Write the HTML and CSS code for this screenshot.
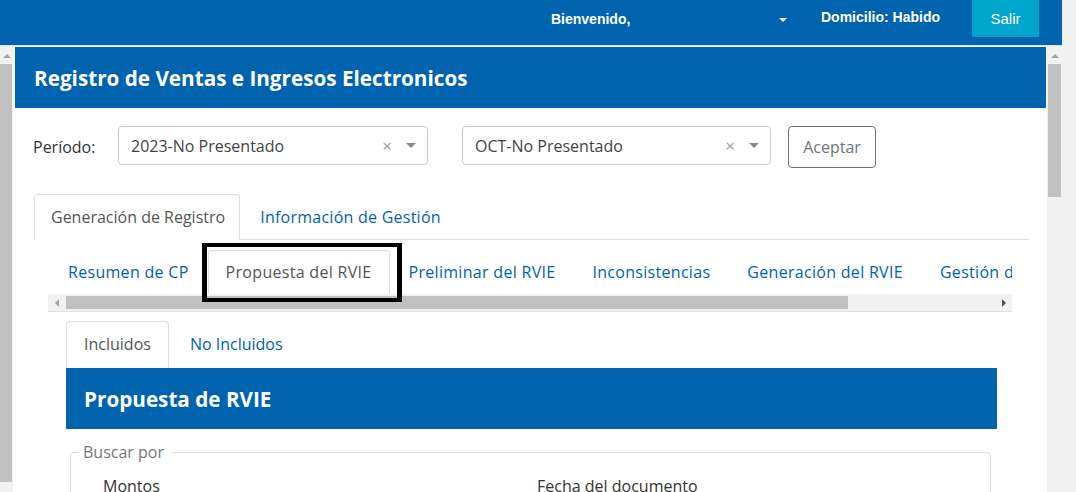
FILE: index.html
```html
<!DOCTYPE html>
<html lang="es">
<head>
<meta charset="utf-8">
<title>Registro de Ventas e Ingresos Electronicos</title>
<link rel="stylesheet" href="styles.css">
</head>
<body>
<div class="screen">
  <div class="main">
    <header class="topbar">
      <div class="user">
        <span>Bienvenido,</span>
        <span class="caret"></span>
      </div>
      <div class="domicilio">Domicilio: Habido</div>
      <button class="salir">Salir</button>
    </header>
    <div class="body-row">
      <div class="vscroll left">
        <span class="arrow-up"></span>
        <span class="thumb"></span>
      </div>
      <div class="panel">
        <div class="panel-head">Registro de Ventas e Ingresos Electronicos</div>
        <div class="panel-body">
          <div class="period">
            <label class="period-label">Período:</label>
            <div class="select s1">
              <span class="select-text">2023-No Presentado</span>
              <span class="select-clear">×</span>
              <span class="select-caret"></span>
            </div>
            <div class="select s2">
              <span class="select-text">OCT-No Presentado</span>
              <span class="select-clear">×</span>
              <span class="select-caret"></span>
            </div>
            <button class="btn-aceptar">Aceptar</button>
          </div>

          <div class="tabs main-tabs">
            <span class="tab active">Generación de Registro</span>
            <span class="tab">Información de Gestión</span>
          </div>

          <div class="subtabs-wrap">
            <div class="subtabs">
              <span class="stab first">Resumen de CP</span>
              <span class="stab active">Propuesta del RVIE<span class="highlight"></span></span>
              <span class="stab">Preliminar del RVIE</span>
              <span class="stab">Inconsistencias</span>
              <span class="stab">Generación del RVIE</span>
              <span class="stab">Gestión de Inconsistencias</span>
            </div>
            <div class="hscroll">
              <span class="harrow-box"><span class="arrow-left"></span></span>
              <span class="hthumb"></span>
              <span class="hspace"></span>
              <span class="harrow-box end"><span class="arrow-right"></span></span>
            </div>

            <div class="inner">
              <div class="tabs inner-tabs">
                <span class="tab active">Incluidos</span>
                <span class="tab">No Incluidos</span>
              </div>
              <div class="section-head">Propuesta de RVIE</div>
              <fieldset class="search">
                <legend>Buscar por</legend>
                <div class="search-row">
                  <span>Montos</span>
                  <span>Fecha del documento</span>
                </div>
              </fieldset>
            </div>
          </div>
        </div>
      </div>
      <div class="vscroll right">
        <span class="arrow-up"></span>
        <span class="thumb"></span>
      </div>
    </div>
  </div>
  <div class="outer-track"></div>
</div>
</body>
</html>
```

FILE: styles.css
```css
* { box-sizing: border-box; }
html, body { margin: 0; padding: 0; }
body {
  background: #f1f1f1;
  font-family: "Open Sans", "Noto Sans", sans-serif;
  overflow: hidden;
}
.screen { display: flex; width: 1076px; height: 492px; }
.main { width: 1062px; display: flex; flex-direction: column; }
.outer-track { flex: 1; background: #f1f1f1; }

/* top bar */
.topbar {
  height: 46px;
  flex: none;
  background: #0063ad;
  border-bottom: 1px solid #e3e3e3;
  display: flex;
  align-items: flex-start;
  justify-content: flex-end;
  padding-right: 23px;
  font-family: "Liberation Sans", Arial, sans-serif;
  font-weight: bold;
  font-size: 14px;
  color: #fff;
}
.user {
  width: 239px;
  height: 37px;
  display: flex;
  align-items: center;
  justify-content: space-between;
}
.caret {
  width: 0; height: 0;
  border-left: 4px solid transparent;
  border-right: 4px solid transparent;
  border-top: 4px solid #fff;
  margin-right: 3px;
  margin-top: 2px;
}
.domicilio { margin-left: 31px; min-width: 122px; height: 35px; line-height: 35px; }
.salir {
  margin-left: 29px;
  width: 67px;
  height: 37px;
  border: 0;
  background: #00a5cc;
  color: #fff;
  font-family: "Liberation Sans", Arial, sans-serif;
  font-size: 15px;
  padding: 0;
}

/* body */
.body-row { flex: 1; display: flex; background: #fff; min-height: 0; }
.vscroll {
  background: #f1f1f1;
  display: flex;
  flex-direction: column;
  align-items: center;
}
.vscroll.left { width: 13px; align-items: flex-start; }
.vscroll.left .arrow-up { margin-left: 3px; }
.vscroll.left .thumb { width: 12px; height: 418px; }
.vscroll.right { width: 15px; margin-left: 1px; }
.vscroll.right .thumb { width: 13px; height: 133px; }
.arrow-up {
  width: 0; height: 0;
  border-left: 4px solid transparent;
  border-right: 4px solid transparent;
  border-bottom: 4px solid #a3a3a3;
  margin-top: 8px;
}
.thumb { display: block; background: #c1c1c1; margin-top: 6px; }

.panel {
  width: 1031px;
  margin-left: 2px;
  padding-top: 1px;
  overflow: hidden;
}
.panel-head, .section-head {
  height: 61px;
  background: #0063ad;
  color: #fff;
  font-weight: 700;
  font-size: 20.7px;
  display: flex;
  align-items: center;
}
.panel-head { padding-left: 19px; }
.section-head { padding-left: 18px; }

.panel-body { padding: 18px 17px 0 18px; }

.period { display: flex; align-items: flex-start; height: 42px; }
.period-label {
  width: 85px;
  line-height: 42px;
  font-size: 16px;
  color: #333;
}
.select {
  height: 39px;
  border: 1px solid #ccc;
  border-radius: 4px;
  display: flex;
  align-items: center;
  padding: 0 11px 0 12px;
  font-size: 16px;
  color: #444;
}
.s1 { width: 310px; margin-right: 34px; }
.s2 { width: 309px; margin-right: 17px; }
.select-text { flex: 1; }
.select-clear { color: #999; font-size: 17px; margin-right: 14px; }
.select-caret {
  width: 0; height: 0;
  border-left: 5px solid transparent;
  border-right: 5px solid transparent;
  border-top: 5px solid #888;
}
.btn-aceptar {
  width: 88px;
  height: 42px;
  border: 1px solid #6c757d;
  border-radius: 4px;
  background: #fff;
  color: #6c757d;
  font-family: "Open Sans", "Noto Sans", sans-serif;
  font-size: 16px;
  padding: 0;
}

/* tabs */
.tabs { display: flex; }
.tab {
  padding: 10px 17px;
  border: 1px solid transparent;
  border-radius: 4px 4px 0 0;
  line-height: 24px;
  font-size: 16px;
  color: #0063ad;
  white-space: nowrap;
}
.tab.active { color: #555; border-color: #ddd #ddd #fff; background: #fff; }
.main-tabs { margin: 26px 0 0 1px; border-bottom: 1px solid #ddd; }
.main-tabs .tab { margin-bottom: -1px; }
.main-tabs .tab.active { padding: 10px 14px 10px 16px; }
.main-tabs .tab + .tab { padding-left: 19px; letter-spacing: 0.25px; }

.subtabs-wrap { margin: 0 17px 0 15px; }
.subtabs {
  display: flex;
  padding-top: 10px;
  overflow: clip visible;
  white-space: nowrap;
}
.stab {
  position: relative;
  flex: none;
  padding: 9px 17px 10px;
  border: 1px solid transparent;
  border-bottom: 0;
  border-radius: 4px 4px 0 0;
  line-height: 24px;
  font-size: 16px;
  letter-spacing: 0.3px;
  color: #0063ad;
  margin-right: 1px;
}
.stab.first { margin-left: 2px; margin-right: 1px; }
.stab.active { color: #555; border-color: #ddd; }
.highlight {
  position: absolute;
  left: -7px;
  right: -13px;
  top: -8px;
  bottom: -8px;
  border-style: solid;
  border-color: #000;
  border-width: 4px 5px;
  pointer-events: none;
  z-index: 2;
}

.hscroll {
  height: 18px;
  background: #f1f1f1;
  border-bottom: 1px solid #e3e3e3;
  display: flex;
  align-items: center;
}
.harrow-box { width: 18px; display: flex; justify-content: center; }
.harrow-box.end { width: 16px; }
.arrow-left {
  width: 0; height: 0;
  border-top: 4px solid transparent;
  border-bottom: 4px solid transparent;
  border-right: 4px solid #a3a3a3;
}
.arrow-right {
  width: 0; height: 0;
  border-top: 4px solid transparent;
  border-bottom: 4px solid transparent;
  border-left: 4px solid #505050;
}
.hthumb { width: 782px; height: 13px; background: #c1c1c1; }
.hspace { flex: 1; }

.inner { margin: 9px 15px 0 18px; }
.inner-tabs .tab { padding-bottom: 11px; }
.inner-tabs .tab.active { border-bottom: 0; }
.inner-tabs .tab + .tab { padding-left: 20px; }

.search {
  margin: 11px 6px 0 4px;
  border: 1px solid #ddd;
  border-radius: 4px;
  padding: 0 8px;
  min-height: 60px;
}
.search legend {
  padding: 0 8px 0 4px;
  font-size: 16px;
  line-height: 24px;
  color: #777;
}
.search-row {
  display: grid;
  grid-template-columns: 434px 1fr;
  padding: 10px 0 0 24px;
  font-size: 16px;
  line-height: 24px;
  color: #333;
}
```
